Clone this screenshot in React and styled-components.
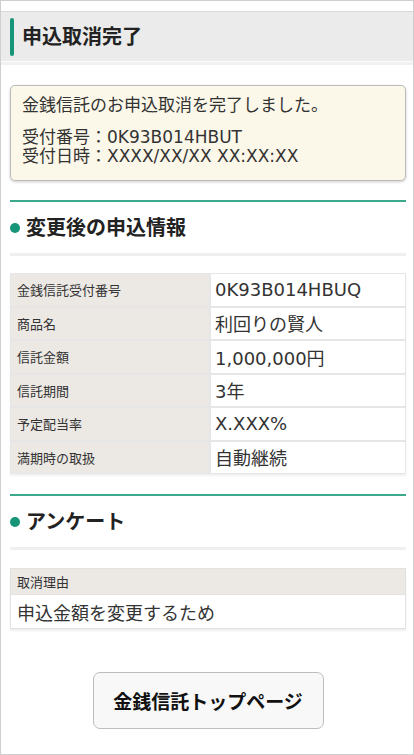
import React from "react";
import styled, { createGlobalStyle } from "styled-components";

const GlobalStyle = createGlobalStyle`
  html, body {
    margin: 0;
    padding: 0;
    background: #ffffff;
  }
  body {
    font-family: "DejaVu Sans", "Noto Sans CJK JP", sans-serif;
    color: #333333;
  }
  * { box-sizing: border-box; }
`;

const GREEN = "#169579";
const LINE_GREEN = "#3aa98c";
const LABEL_BG = "#ece8e4";

const Frame = styled.div`
  width: 414px;
  min-height: 755px;
  border: 1px solid #cfcfcf;
  padding-top: 10px;
  display: flex;
  flex-direction: column;
`;

const PageHeader = styled.header`
  height: 50px;
  border-top: 1px solid #d8d8d8;
  background: #ebebeb;
  box-shadow: 0 1px 0 #fbfbfb, 0 4px 0 #f1f1f1;
  display: flex;
  align-items: center;
  gap: 8px;
  padding-left: 9px;
`;

const AccentBar = styled.span`
  width: 4px;
  height: 38px;
  border-radius: 2px;
  background: ${GREEN};
`;

const PageTitle = styled.h1`
  margin: 0;
  font-size: 20px;
  font-weight: 700;
  line-height: 1;
  color: #222222;
`;

const Content = styled.main`
  padding: 0 7px 0 9px;
  display: flex;
  flex-direction: column;
`;

const Notice = styled.div`
  margin-top: 24px;
  border: 1px solid #bcbcbc;
  border-radius: 5px;
  background: #fcf8e9;
  box-shadow: 0 1px 3px rgba(0, 0, 0, 0.2);
  padding: 7px 11px 14px;
  font-size: 17px;
  color: #333333;
`;

const NoticeLine = styled.p`
  margin: ${(p) => (p.$gap ? "11px" : "0")} 0 0;
  line-height: ${(p) => (p.$tight ? "19px" : "24px")};
`;

const Section = styled.section`
  margin-top: ${(p) => p.$top}px;
  display: flex;
  flex-direction: column;
`;

const SectionTitle = styled.h2`
  margin: 0;
  border-top: 2px solid ${LINE_GREEN};
  border-bottom: 3px solid #efefef;
  padding: 12px 0 11px;
  display: flex;
  align-items: center;
  gap: 6px;
  font-size: 20px;
  font-weight: 700;
  line-height: 28px;
  color: #222222;
`;

const Dot = styled.span`
  width: 10px;
  height: 10px;
  border-radius: 50%;
  background: ${GREEN};
  flex: none;
`;

const InfoTable = styled.div`
  margin-top: 17px;
  display: grid;
  grid-template-columns: 198px 1fr;
  grid-auto-rows: 31.5px;
  gap: 2px;
  padding: 1px;
  background: #e6e6e6;
  box-shadow: 0 2px 2px rgba(0, 0, 0, 0.06);
`;

const LabelCell = styled.div`
  background: ${LABEL_BG};
  display: flex;
  align-items: center;
  padding-left: 6px;
  font-size: 13px;
  color: #333333;
`;

const ValueCell = styled.div`
  background: #ffffff;
  display: flex;
  align-items: center;
  padding-left: 4px;
  font-size: 18px;
  color: #333333;
`;

const ReasonBox = styled.div`
  margin-top: 18px;
  border: 1px solid #e2e2e2;
  box-shadow: 0 2px 2px rgba(0, 0, 0, 0.07);
  display: flex;
  flex-direction: column;
`;

const ReasonHead = styled.div`
  height: 26px;
  background: ${LABEL_BG};
  border-bottom: 1px solid #e4e4e4;
  display: flex;
  align-items: center;
  padding-left: 6px;
  font-size: 13px;
  color: #333333;
`;

const ReasonBody = styled.div`
  height: 33px;
  display: flex;
  align-items: center;
  padding-left: 6px;
  font-size: 18px;
  color: #333333;
`;

const ButtonRow = styled.div`
  margin-top: 43px;
  display: flex;
  justify-content: center;
`;

const TopButton = styled.button`
  width: 231px;
  height: 57px;
  border: 1px solid #bdbdbd;
  border-radius: 7px;
  background: #f8f8f8;
  font-family: "DejaVu Sans", "Noto Sans CJK JP", sans-serif;
  font-size: 19px;
  font-weight: 700;
  color: #111111;
  cursor: pointer;
  padding: 0;
`;

const rows = [
  ["金銭信託受付番号", "0K93B014HBUQ"],
  ["商品名", "利回りの賢人"],
  ["信託金額", "1,000,000円"],
  ["信託期間", "3年"],
  ["予定配当率", "X.XXX%"],
  ["満期時の取扱", "自動継続"],
];

export default function App() {
  return (
    <>
      <GlobalStyle />
      <Frame>
        <PageHeader>
          <AccentBar />
          <PageTitle>申込取消完了</PageTitle>
        </PageHeader>
        <Content>
          <Notice>
            <NoticeLine>金銭信託のお申込取消を完了しました。</NoticeLine>
            <NoticeLine $gap $tight>
              受付番号：0K93B014HBUT
              <br />
              受付日時：XXXX/XX/XX XX:XX:XX
            </NoticeLine>
          </Notice>

          <Section $top={19}>
            <SectionTitle>
              <Dot />
              変更後の申込情報
            </SectionTitle>
            <InfoTable>
              {rows.map(([label, value]) => (
                <React.Fragment key={label}>
                  <LabelCell>{label}</LabelCell>
                  <ValueCell>{value}</ValueCell>
                </React.Fragment>
              ))}
            </InfoTable>
          </Section>

          <Section $top={20}>
            <SectionTitle>
              <Dot />
              アンケート
            </SectionTitle>
            <ReasonBox>
              <ReasonHead>取消理由</ReasonHead>
              <ReasonBody>申込金額を変更するため</ReasonBody>
            </ReasonBox>
          </Section>

          <ButtonRow>
            <TopButton type="button">金銭信託トップページ</TopButton>
          </ButtonRow>
        </Content>
      </Frame>
    </>
  );
}
